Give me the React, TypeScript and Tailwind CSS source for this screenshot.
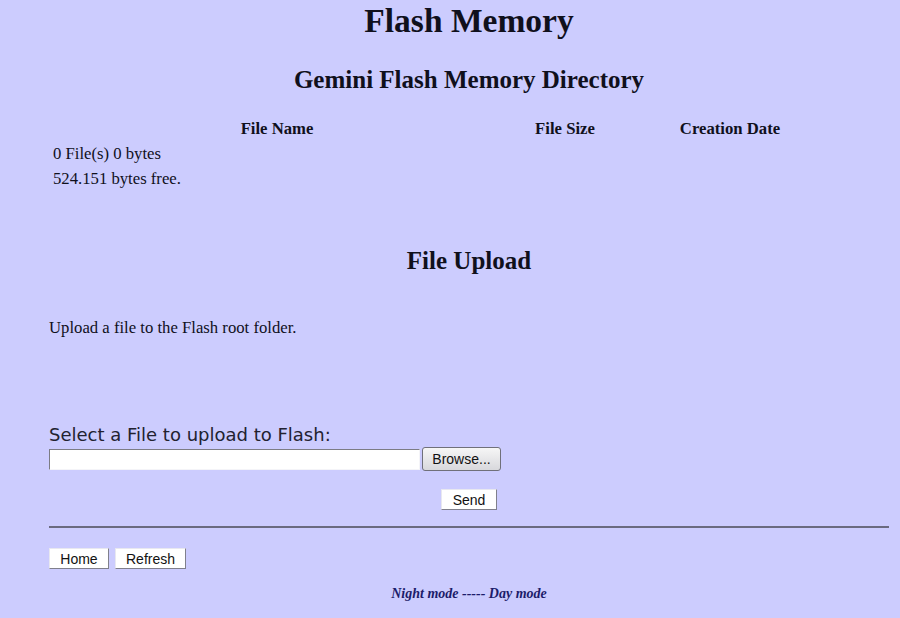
export default function App() {
  const serif = { fontFamily: '"Liberation Serif", "Times New Roman", serif' };

  return (
    <div className="min-h-[618px] w-[900px] bg-[#ccccfe] text-[#10101c]" style={serif}>
      <div className="ml-[49px] flex w-[840px] flex-col">
        <h1 className="h-[42px] text-center text-[33.5px] font-bold leading-[42px]">Flash Memory</h1>

        <h2 className="mt-[20px] h-[36px] text-center text-[25px] font-bold leading-[36px]">
          Gemini Flash Memory Directory
        </h2>

        {/* directory listing */}
        <div className="mt-[18px] grid grid-cols-[456px_120px_210px] text-[16.7px] leading-[25px]">
          <div className="text-center font-bold">File Name</div>
          <div className="text-center font-bold">File Size</div>
          <div className="text-center font-bold">Creation Date</div>
          <div className="col-span-3 pl-[4px]">0 File(s) 0 bytes</div>
          <div className="col-span-3 pl-[4px]">524.151 bytes free.</div>
        </div>

        <h2 className="mt-[52px] h-[36px] text-center text-[25px] font-bold leading-[36px]">File Upload</h2>

        <p className="mt-[36px] text-[16.7px] leading-[25px]">Upload a file to the Flash root folder.</p>

        {/* upload form */}
        <div
          className="mt-[83px] h-[24px] text-[18px] leading-[24px] text-[#222230]"
          style={{ fontFamily: '"DejaVu Sans", Verdana, sans-serif' }}
        >
          Select a File to upload to Flash:
        </div>
        <div className="flex h-[24px] items-center gap-[2px]" style={{ fontFamily: '"Liberation Sans", Arial, sans-serif' }}>
          <div className="h-[21px] w-[371px] border border-[#f4f4f8] border-l-[#7c7c84] border-t-[#7c7c84] bg-white" />
          <button
            type="button"
            className="h-[24px] w-[79px] rounded-[3px] border border-[#70707a] bg-gradient-to-b from-[#f6f6f6] to-[#d8d8dc] text-[14px] text-[#111]"
          >
            Browse...
          </button>
        </div>
        <button
          type="button"
          className="ml-[392px] mt-[18px] h-[21px] w-[56px] border border-[#e8e8f0] border-b-[#80808c] border-r-[#80808c] bg-white text-[14px] text-[#111]"
          style={{ fontFamily: '"Liberation Sans", Arial, sans-serif' }}
        >
          Send
        </button>

        <hr className="mt-[16px] border-0 border-t-[2px] border-[#6a6a80]" />

        <div className="mt-[20px] flex gap-[6px]" style={{ fontFamily: '"Liberation Sans", Arial, sans-serif' }}>
          <button
            type="button"
            className="h-[21px] w-[60px] border border-[#e8e8f0] border-b-[#80808c] border-r-[#80808c] bg-white text-[14px] text-[#111]"
          >
            Home
          </button>
          <button
            type="button"
            className="h-[21px] w-[71px] border border-[#e8e8f0] border-b-[#80808c] border-r-[#80808c] bg-white text-[14px] text-[#111]"
          >
            Refresh
          </button>
        </div>

        <div className="mt-[15px] h-[20px] text-center text-[14px] font-bold italic leading-[20px] text-[#1c1c6a]">
          <span>Night mode</span> ----- <span>Day mode</span>
        </div>
      </div>
    </div>
  );
}
